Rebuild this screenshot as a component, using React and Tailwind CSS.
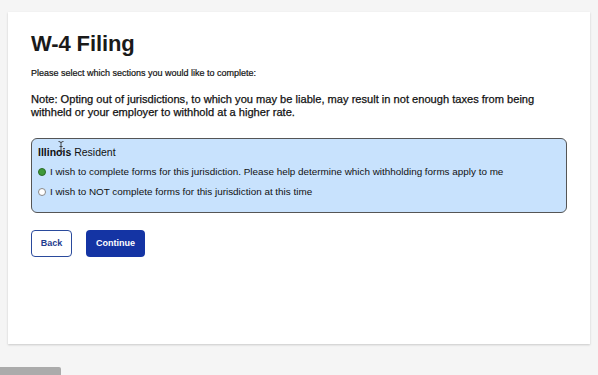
import React from "react";

export default function App() {
  return (
    <div className="relative w-[598px] h-[375px] overflow-hidden bg-[#f5f5f5]" style={{ fontFamily: "'Liberation Sans', Arial, sans-serif" }}>
      <div className="ml-[8px] mt-[12px] w-[582px] h-[332px] bg-white shadow-[0_1px_2px_rgba(0,0,0,0.18)] px-[23px] pt-[20px]">
        <h1 className="text-[22px] leading-[24px] font-bold text-[#1a1a1a] tracking-[-0.1px]">W-4 Filing</h1>
        <p className="mt-[11px] text-[9px] leading-[12px] text-[#111] [-webkit-text-stroke:0.2px_#111]">Please select which sections you would like to complete:</p>
        <p className="mt-[14px] text-[11.1px] leading-[12.5px] text-[#111] [-webkit-text-stroke:0.25px_#111]">
          Note: Opting out of jurisdictions, to which you may be liable, may result in not enough taxes from being withheld or your employer to withhold at a higher rate.
        </p>
        <div className="mt-[20px] w-[536px] h-[75px] rounded-[6px] border border-[#555] bg-[#c8e2fd] px-[6px] pt-[6px]">
          <div className="relative text-[10.5px] leading-[14px] text-[#111]">
            <span className="font-bold">Illinois</span> Resident
            <svg className="absolute left-[20px] top-[-4px]" width="6" height="11" viewBox="0 0 6 11">
              <path d="M0.5 0.5 Q3 0.5 3 2 Q3 0.5 5.5 0.5 M3 2 V9 M0.5 10.5 Q3 10.5 3 9 Q3 10.5 5.5 10.5 M1.5 5.5 H4.5" stroke="#333" strokeWidth="0.9" fill="none" />
            </svg>
          </div>
          <div className="mt-[6px] flex items-center gap-[4px] text-[9.9px] leading-[14px] text-[#111]">
            <span className="w-[8px] h-[8px] rounded-full bg-[#3f9a3a] border border-[#2a6b27]" />
            <span>I wish to complete forms for this jurisdiction. Please help determine which withholding forms apply to me</span>
          </div>
          <div className="mt-[6px] flex items-center gap-[4px] text-[9.9px] leading-[14px] text-[#111]">
            <span className="w-[8px] h-[8px] rounded-full bg-white border border-[#888]" />
            <span>I wish to NOT complete forms for this jurisdiction at this time</span>
          </div>
        </div>
        <div className="mt-[17px] flex gap-[14px]">
          <button className="w-[41px] h-[27px] rounded-[4px] border-[1.5px] border-[#2a4a9c] bg-white text-[9px] font-bold text-[#1f3d8f]">Back</button>
          <button className="w-[59px] h-[27px] rounded-[4px] bg-[#1434a4] text-[9px] font-bold text-white">Continue</button>
        </div>
      </div>
      <div className="absolute left-0 bottom-0 w-[61px] h-[8px] bg-[#ababab] rounded-tr-[2px]" />
    </div>
  );
}
